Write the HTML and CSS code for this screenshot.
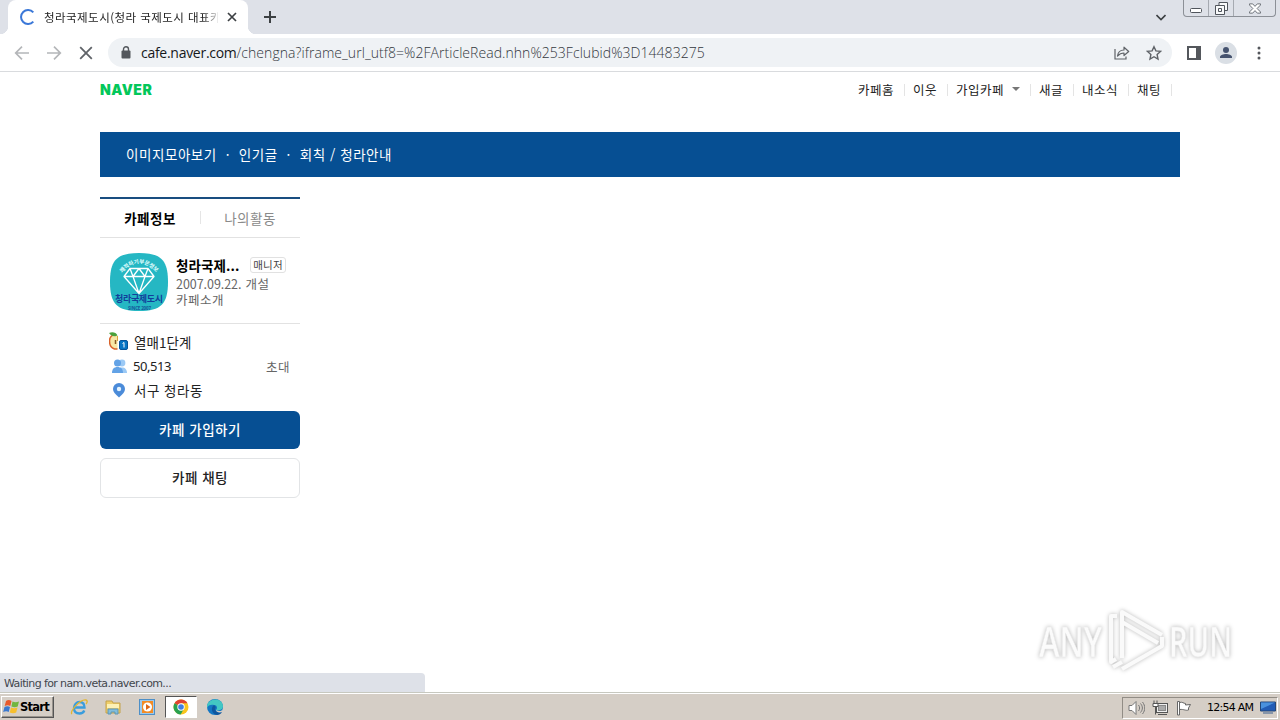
FILE: index.html
```html
<!DOCTYPE html>
<html lang="ko">
<head>
<meta charset="utf-8">
<title>청라국제도시</title>
<link rel="stylesheet" href="styles.css">
</head>
<body>
<div class="screen">
  <header class="tabstrip">
    <div class="tab">
      <svg class="spinner" width="16" height="16" viewBox="0 0 16 16"><path d="M13.3 3.4A7 7 0 1 0 13.3 12.6" fill="none" stroke="#3b78d8" stroke-width="2"/></svg>
      <span class="tab-title">청라국제도시(청라 국제도시 대표카</span>
      <svg class="tab-close" width="10" height="10" viewBox="0 0 10 10"><path d="M1 1l8 8M9 1l-8 8" stroke="#3c4043" stroke-width="1.7"/></svg>
    </div>
    <svg class="newtab" width="12" height="12" viewBox="0 0 12 12"><path d="M6 0v12M0 6h12" stroke="#3c4043" stroke-width="2"/></svg>
    <svg class="chevron" width="10" height="7" viewBox="0 0 10 7"><path d="M.5 1l4.500 4.500L9.500 1" fill="none" stroke="#3c4043" stroke-width="1.600"/></svg>
    <div class="winbuttons">
      <span class="wb wb-min"><svg width="13" height="6" viewBox="0 0 13 6"><rect x=".5" y=".5" width="11" height="4" rx="1" fill="#fff" stroke="#50555c"/></svg></span>
      <span class="wb wb-max"><svg width="13" height="13" viewBox="0 0 13 13"><path d="M4 3V.5h8.500v8H10" fill="#f8f9fa" stroke="#50555c"/><path d="M.5 3.500h9v9h-9zM3.500 6.500h3v3h-3z" fill="#f8f9fa" stroke="#50555c"/></svg></span>
      <span class="wb wb-close"><svg width="12" height="11" viewBox="0 0 13 11"><path d="M.5.5h3.500l2.500 2.700L9 .5h3.500v1.200L8.800 5.500l3.700 3.800v1.200H9L6.500 7.800 4 10.500H.5V9.300l3.700-3.800L.5 1.700z" fill="#fff" stroke="#666b72"/></svg></span>
    </div>
  </header>

  <div class="toolbar">
    <div class="nav">
      <svg width="16" height="16" viewBox="0 0 16 16"><path d="M15 8H2M8 1.700L1.700 8 8 14.300" fill="none" stroke="#b4b6b9" stroke-width="1.700"/></svg>
      <svg width="16" height="16" viewBox="0 0 16 16"><path d="M1 8h13M8 1.700L14.300 8 8 14.300" fill="none" stroke="#b4b6b9" stroke-width="1.700"/></svg>
      <svg width="16" height="16" viewBox="0 0 16 16"><path d="M2.200 2.200l11.600 11.600M13.800 2.200L2.200 13.800" stroke="#5f6368" stroke-width="1.800"/></svg>
    </div>
    <div class="omnibox">
      <svg class="lock" width="10" height="13" viewBox="0 0 10 13"><path d="M2.500 5V3.300a2.500 2.500 0 0 1 5 0V5" fill="none" stroke="#54585d" stroke-width="1.400"/><rect x=".5" y="4.500" width="9" height="8" rx="1" fill="#54585d"/></svg>
      <span class="url"><b>cafe.naver.com</b>/chengna?iframe_url_utf8=%2FArticleRead.nhn%253Fclubid%3D14483275</span>
      <svg class="share" width="16" height="14" viewBox="0 0 16 14"><path d="M1 3v10h11v-2.500" fill="none" stroke="#5f6368" stroke-width="1.200"/><path d="M3.500 10C4 6 6.500 4 10 4V1.200L14.700 5.500 10 9.500V7C7.500 7 5.500 7.800 3.500 10z" fill="none" stroke="#5f6368" stroke-width="1.200" stroke-linejoin="round"/></svg>
      <svg class="star" width="16" height="16" viewBox="0 0 16 16"><path d="M8 1.700l1.900 4.200 4.600.5-3.400 3.100.9 4.500-4-2.300-4 2.300.9-4.500-3.400-3.100 4.600-.5z" fill="none" stroke="#5f6368" stroke-width="1.400"/></svg>
    </div>
    <svg class="panel" width="14" height="14" viewBox="0 0 14 14"><rect x="1" y="1" width="12" height="12" fill="none" stroke="#54575c" stroke-width="2"/><path d="M9 1h4v12H9z" fill="#54575c"/></svg>
    <svg class="avatar" width="22" height="22" viewBox="0 0 22 22"><circle cx="11" cy="11" r="11" fill="#dadfe5"/><circle cx="11" cy="8" r="3" fill="#46536f"/><path d="M5 16v-1c0-2 3.500-3 6-3s6 1 6 3v1z" fill="#46536f"/></svg>
    <svg class="kebab" width="4" height="14" viewBox="0 0 4 14"><g fill="#54575c"><circle cx="2" cy="2" r="1.500"/><circle cx="2" cy="7" r="1.500"/><circle cx="2" cy="12" r="1.500"/></g></svg>
  </div>

  <main class="page">
    <div class="gnb">
      <span class="naver">NAVER</span>
      <nav class="gnb-links">
        <span class="g1">카페홈</span><span class="g2">이웃</span><span class="g3">가입카페<i class="caret"></i></span><span class="g4">새글</span><span class="g5">내소식</span><span class="g6">채팅</span>
      </nav>
    </div>
    <nav class="menubar"><span>이미지모아보기</span><i>·</i><span>인기글</span><i>·</i><span>회칙 / 청라안내</span></nav>
    <aside class="side">
      <div class="side-tabs"><span class="on">카페정보</span><span class="off">나의활동</span></div>
      <div class="profile">
        <svg class="cafe-logo" width="58" height="58" viewBox="0 0 58 58">
          <defs><path id="arc" d="M12 20Q29 1 47 20"/></defs>
          <path d="M29 0C51 0 58 7 58 29S51 58 29 58 0 51 0 29 7 0 29 0z" fill="#25b7c3"/>
          <text class="logo-arc"><textPath href="#arc" textLength="40">쾌적하기부문정보</textPath></text>
          <path d="M20 15.500h18l6 8-15 17-15-17zM14 23.500h30M20 15.500l3 8 6 17 6-17 3-8M23 23.500l6-8 6 8" fill="none" stroke="#fff" stroke-width="1.300" stroke-linejoin="round"/>
          <text class="logo-name" x="5" y="49" textLength="48">청라국제도시</text>
          <text class="logo-since" x="18" y="56.500" textLength="23">SINCE 2007</text>
        </svg>
        <div class="info">
          <div class="name-row"><b>청라국제...</b><span class="badge">매니저</span></div>
          <div class="meta"><span class="date">2007.09.22.</span> 개설</div>
          <div class="meta">카페소개</div>
        </div>
      </div>
      <ul class="stats">
        <li>
          <svg width="20" height="20" viewBox="0 0 20 20"><path d="M7 3.500C3 2 .5 5 .5 9c0 4 2 7 5 8h3V4z" fill="#f7e7a5"/><path d="M7 3.500C3 2 .5 5 .5 9c0 4 2 7 5 8h3" fill="none" stroke="#d9622a" stroke-width="1.500"/><path d="M8.500 4v5" stroke="#d9a43c"/><path d="M0 1c3-1.500 7-1 8.500 2.500C5 5 2 4 0 1z" fill="#4ba13b"/><path d="M6.500 8v4" stroke="#895822" stroke-width="1.500"/><rect x="10.500" y="8.500" width="8" height="9" rx="1.500" fill="#0875c3" stroke="#075499"/><path d="M13.500 11.500l1.500-1v5" fill="none" stroke="#fff"/></svg>
          <span class="level">열매1단계</span>
        </li>
        <li>
          <svg width="20" height="20" viewBox="0 0 20 20"><g fill="#9bc9f5"><circle cx="13" cy="7" r="3.400"/><path d="M11 11.500h2c3 0 5 2 5 5.500h-5z"/></g><circle cx="8.500" cy="7" r="3.500" fill="#62a2e6"/><path d="M3 17c0-4 2-6 5.500-6s5.500 2 5.500 6z" fill="#62a2e6"/></svg>
          <span class="count">50,513</span><span class="invite">초대</span>
        </li>
        <li>
          <svg width="20" height="20" viewBox="0 0 20 20"><path d="M10 17.500C6 14 4 11.500 4 9a6 6 0 0 1 12 0c0 2.500-2 5-6 8.500z" fill="#4b8bd9"/><circle cx="10" cy="9" r="2.200" fill="#e4f4ff"/></svg>
          <span>서구 청라동</span>
        </li>
      </ul>
      <div class="btn join">카페 가입하기</div>
      <div class="btn chat">카페 채팅</div>
    </aside>
  </main>

  <svg class="watermark" width="220" height="80" viewBox="0 0 220 80">
    <g class="wm">
      <text x="10" y="55" textLength="63" lengthAdjust="spacingAndGlyphs">ANY</text>
      <text x="140" y="55" textLength="63" lengthAdjust="spacingAndGlyphs">RUN</text>
      <path d="M88 14h-6v46l5-3M93 56V10l40 23M93 20l36 21M84 65l9-5M93 67l40-23v-9"/>
    </g>
  </svg>

  <div class="status">Waiting for nam.veta.naver.com...</div>

  <footer class="taskbar">
    <div class="start">
      <svg width="17" height="16" viewBox="0 0 17 16"><path d="M3 2c2-1.500 4-1 5.500 0L7.300 7C5.500 6 4 6 1.700 7z" fill="#e8592b"/><path d="M9.500 2.500c2 1 4 1 6.500 0L14.700 7.500c-2 1-4 1-6.300 0z" fill="#72b63f"/><path d="M1.500 8c2-1.200 4-1 5.500 0l-1.300 5c-1.500-1-3.500-1-5.500 0z" fill="#3a78cf"/><path d="M8 8.500c2 1 4 1 6.500 0l-1.300 5c-2 1-4 1-6.400 0z" fill="#f7bf2e"/></svg>
      <b>Start</b>
    </div>
    <div class="apps">
      <span><svg width="18" height="18" viewBox="0 0 18 18"><path d="M4 9.500h10.500C14.500 6 12.500 4 9.500 4S4 6.500 4 10s2 5.500 5.500 5.500c2.300 0 4-1 4.800-3" fill="none" stroke="#3a9ddd" stroke-width="2.300"/><path d="M2 16c-3-2 8-15 14-14 2 .5 1 3 0 4" fill="none" stroke="#e3b62f" stroke-width="1.300"/></svg></span>
      <span><svg width="18" height="18" viewBox="0 0 18 18"><path d="M2 3h6l1 2h7v10H2z" fill="#efcf6b" stroke="#c4a24b"/><path d="M3 6h12v4H3z" fill="#fdf1b5"/><path d="M4 16v-5h10v5h-3v-2H7v2z" fill="#82bddb" stroke="#5d96b7"/></svg></span>
      <span><svg width="18" height="18" viewBox="0 0 18 18"><rect x="1.500" y="1.500" width="15" height="15" fill="#9dc9eb" stroke="#4d8fc7"/><rect x="4" y="3" width="11" height="12" fill="#f38b24"/><circle cx="9.500" cy="9" r="4.500" fill="#fff"/><path d="M8 6l4.500 3L8 12z" fill="#df6817"/></svg></span>
      <span class="active"><svg width="16" height="16" viewBox="0 0 16 16"><circle cx="8" cy="8" r="7.500" fill="#f9c51e"/><path d="M8 8L1.500 4.200A7.500 7.500 0 0 1 14.500 4.200H8z" fill="#df4332"/><path d="M8 8L1.500 4.200A7.500 7.500 0 0 0 7.700 15.500L11 9.500z" fill="#29a150"/><circle cx="8" cy="8" r="3.700" fill="#fff"/><circle cx="8" cy="8" r="2.800" fill="#3f7fe2"/></svg></span>
      <span><svg width="18" height="18" viewBox="0 0 18 18"><circle cx="9" cy="9" r="8" fill="#1476c3"/><path d="M1 8C2 0 16-1 17 8c0 4-4 5-7 4 2-2 1-5-2-5-3-.5-6 0-7 3z" fill="#43c7c3"/><path d="M8 7c-4 3-2 9 3 10 2 0 4-1 5-3-3 1-7 0-7-3 1-1 1-3-1-4z" fill="#0f569f"/><path d="M10 12c3 2 6 1 7-1l-1 3c-3 1-6 0-6-2z" fill="#d5cdc4"/></svg></span>
    </div>
    <div class="tray">
      <svg class="vol" width="17" height="16" viewBox="0 0 17 16"><path d="M1 5.500h3l4-4v13l-4-4H1z" fill="#fff" stroke="#777"/><path d="M10.500 5c1.500 2 1.500 4 0 6M12.500 3.500c2.500 3 2.500 6 0 9M14.500 2c3 4 3 8 0 12" fill="none" stroke="#777"/></svg>
      <svg class="net" width="17" height="16" viewBox="0 0 17 16"><rect x="4.500" y="3.500" width="11" height="9" fill="#eee" stroke="#555"/><rect x="6.500" y="5.500" width="7" height="5" fill="#aaa" stroke="#888"/><path d="M6 14.500h9" stroke="#555"/><path d="M2 .5v3M5 .5v3M1 3.500h5v3H1zM3.500 6.500v8" fill="#fff" stroke="#555"/></svg>
      <svg class="flag" width="16" height="16" viewBox="0 0 16 16"><path d="M1.500 15V1.500h2V15zM3.500 2.500c3-1 4 1 6 1v1.500l5-.5-2 3.500v2c-3 1-4-1-9-.5z" fill="#fff" stroke="#666"/></svg>
      <span class="clock">12:54 AM</span>
      <svg class="screen-icon" width="16" height="14" viewBox="0 0 16 14"><path d="M.5 1h15v9h-15z" fill="#225cb5" stroke="#244777"/><path d="M1 1.500h14L1 8z" fill="#4a91dd"/><path d="M3 12h10" stroke="#8796aa" stroke-width="2"/></svg>
    </div>
  </footer>
</div>
</body>
</html>
```
FILE: styles.css
```css
* { box-sizing: border-box; }
body { margin: 0; font-family: "Noto Sans CJK KR", sans-serif; background: #fff; color: #222; }
svg { display: block; flex: none; }
i { font-style: normal; }
.screen { position: relative; width: 1280px; height: 720px; overflow: hidden; display: flex; flex-direction: column; }

.tabstrip { flex: none; height: 34px; background: #dee1e8; display: flex; align-items: flex-start; }
.tab { position: relative; margin-left: 8px; width: 240px; height: 34px; padding: 0 11px 0 12px; background: #fff; border-radius: 8px 8px 0 0; display: flex; align-items: center; }
.tab::before, .tab::after { content: ""; position: absolute; bottom: 0; width: 8px; height: 8px; }
.tab::before { left: -8px; background: radial-gradient(circle at 0 0, #dee1e8 8px, #fff 8.5px); }
.tab::after { right: -8px; background: radial-gradient(circle at 100% 0, #dee1e8 8px, #fff 8.5px); }
.tab-title { width: 174px; margin-left: 8px; overflow: hidden; white-space: nowrap; font-size: 11.5px; line-height: 18px; letter-spacing: .45px; -webkit-mask-image: linear-gradient(90deg, #000 91%, rgba(0,0,0,.2)); mask-image: linear-gradient(90deg, #000 91%, rgba(0,0,0,.2)); }
.tab-close { margin-left: auto; }
.newtab { margin: 11px 0 0 16px; }
.chevron { margin: 14px 0 0 auto; }
.winbuttons { margin: 0 4px 0 17px; width: 93px; height: 17px; border: 1px solid #8c9097; border-top: 0; border-radius: 0 0 4px 4px; display: flex; }
.wb { display: flex; justify-content: center; border-right: 1px solid #a6aab1; }
.wb-min { width: 25px; padding-top: 8px; }
.wb-max { width: 25px; padding-top: 2px; }
.wb-close { flex: 1; padding-top: 3px; border: 0; }

.toolbar { flex: none; height: 38px; border-bottom: 1px solid #d9dbde; display: flex; align-items: center; }
.nav { display: flex; gap: 16px; margin-left: 14px; }
.omnibox { margin-left: 14px; width: 1064px; height: 29px; border-radius: 15px; background: #eff2f5; display: flex; align-items: center; }
.lock { margin-left: 13px; }
.url { margin-left: 10px; font: 300 14px/20px "Open Sans", sans-serif; color: #33383e; letter-spacing: .05px; white-space: nowrap; }
.url b { font-weight: 400; color: #15181b; letter-spacing: -.28px; }
.share { margin-left: auto; }
.star { margin: 0 10px 0 16px; }
.panel { margin-left: 15px; }
.avatar { margin-left: 14px; }
.kebab { margin-left: 20px; }

.page { flex: 1; width: 1080px; margin: 0 auto; }
.gnb { height: 60px; padding-top: 8px; display: flex; justify-content: space-between; }
.naver { font: 900 14px/20px Inter, sans-serif; letter-spacing: .5px; color: #03c75a; }
.gnb-links { display: flex; height: 20px; padding-right: 8px; font-size: 12.5px; line-height: 20px; letter-spacing: .5px; }
.gnb-links span { display: flex; align-items: flex-start; background: linear-gradient(#e4e4e4, #e4e4e4) right 4px / 1px 12px no-repeat; padding-left: 8px; }
.g1 { width: 55px; }
.g2 { width: 43px; }
.g3 { width: 83px; }
.g4 { width: 43px; }
.g5 { width: 55px; }
.g6 { width: 43px; }
.caret { margin: 7px 0 0 8px; border: 4px solid transparent; border-top-color: #777; border-bottom: 0; }
.menubar { height: 45px; padding-left: 26px; background: #064f93; color: #fff; font-size: 13.5px; line-height: 44px; letter-spacing: .55px; display: flex; }
.menubar i { width: 22px; text-align: center; }

.side { width: 200px; margin-top: 20px; }
.side-tabs { height: 41px; border-top: 2px solid #194d80; border-bottom: 1px solid #e2e2e2; display: flex; font-size: 13.5px; line-height: 38px; letter-spacing: .5px; text-align: center; background: linear-gradient(#e5e5e5, #e5e5e5) 100px 12px / 1px 13px no-repeat; }
.side-tabs span { width: 100px; }
.on { font-weight: 700; color: #000; }
.off { color: #8a8a8a; }
.profile { height: 86px; padding: 15px 10px; border-bottom: 1px solid #e2e2e2; display: flex; }
.logo-arc { font-size: 5.5px; font-weight: 700; fill: #e2ffff; }
.logo-name { font-size: 9px; font-weight: 700; fill: #123f9b; }
.logo-since { font: 700 4.5px "Open Sans", sans-serif; fill: #16589c; }
.info { margin-left: 8px; }
.name-row { height: 23px; display: flex; align-items: center; white-space: nowrap; font-size: 13.5px; line-height: 20px; color: #000; letter-spacing: .1px; }
.name-row b { width: 74px; }
.badge { width: 36px; height: 16px; border: 1px solid #e1e1e1; border-radius: 3px; font-size: 10.5px; line-height: 13px; text-align: center; color: #444; }
.meta { height: 16px; font-size: 12.5px; line-height: 16px; letter-spacing: .5px; color: #666; white-space: nowrap; }
.date { letter-spacing: -.05px; }
.stats { list-style: none; margin: 0; padding: 6px 10px 0 9px; height: 87px; font-size: 13.5px; letter-spacing: .5px; color: #222; }
.stats li { height: 24px; display: flex; align-items: center; }
.stats svg { margin-right: 5px; }
.stats .level { letter-spacing: .05px; }
.stats .count { margin-left: -1px; font: 13px "Noto Sans", sans-serif; letter-spacing: -.45px; }
.invite { margin-left: auto; font-size: 12.5px; color: #666; }
.btn { border-radius: 6px; text-align: center; font-size: 13.5px; letter-spacing: .5px; font-weight: 500; }
.join { height: 38px; line-height: 36px; background: #064f93; color: #fff; }
.chat { height: 40px; margin-top: 9px; line-height: 36px; border: 1px solid #e2e4e6; }

.watermark { position: absolute; left: 1029px; top: 602px; filter: drop-shadow(0 0 2px rgba(0,0,0,.28)); }
.wm text { font: 600 42px "Open Sans", sans-serif; fill: #fbfbfb; stroke: #eaeaea; stroke-width: .5; }
.wm path { fill: none; stroke: #fafafa; stroke-width: 4; stroke-linejoin: round; }

.status { position: absolute; left: 0; top: 673px; width: 425px; height: 19px; padding-left: 4px; border-radius: 0 4px 0 0; background: #dee1e8; font: 11px/21px "DejaVu Sans", sans-serif; letter-spacing: -.61px; color: #42464d; }
.taskbar { flex: none; height: 28px; background: #d5cec6; border-top: 1px solid #c7c8bf; box-shadow: inset 0 1px #fff; display: flex; align-items: center; }
.start { margin: 1px 0 0 1px; width: 53px; height: 22px; border: 1px solid; border-color: #fff #555 #555 #fff; box-shadow: inset -1px -1px #99948d; display: flex; align-items: center; padding-left: 1px; color: #000; }
.start b { font: 700 11.5px "DejaVu Sans", sans-serif; letter-spacing: -.75px; }
.apps { display: flex; margin: 1px 0 0 9px; gap: 2px; }
.apps span { width: 32px; height: 22px; display: flex; align-items: center; justify-content: center; }
.apps .active { background: #fff; border: 1px solid; border-color: #555 #fff #fff #555; }
.tray { margin: 2px 2px 0 auto; width: 156px; height: 22px; border: 1px solid; border-color: #918c85 #fff #fff #918c85; display: flex; align-items: center; padding-left: 5px; }
.net { margin-left: 7px; }
.flag { margin-left: 7px; }
.clock { width: 48px; margin-left: 15px; white-space: nowrap; font: 11px "DejaVu Sans", sans-serif; letter-spacing: -.75px; color: #000; }
.screen-icon { margin-left: 5px; }
```
